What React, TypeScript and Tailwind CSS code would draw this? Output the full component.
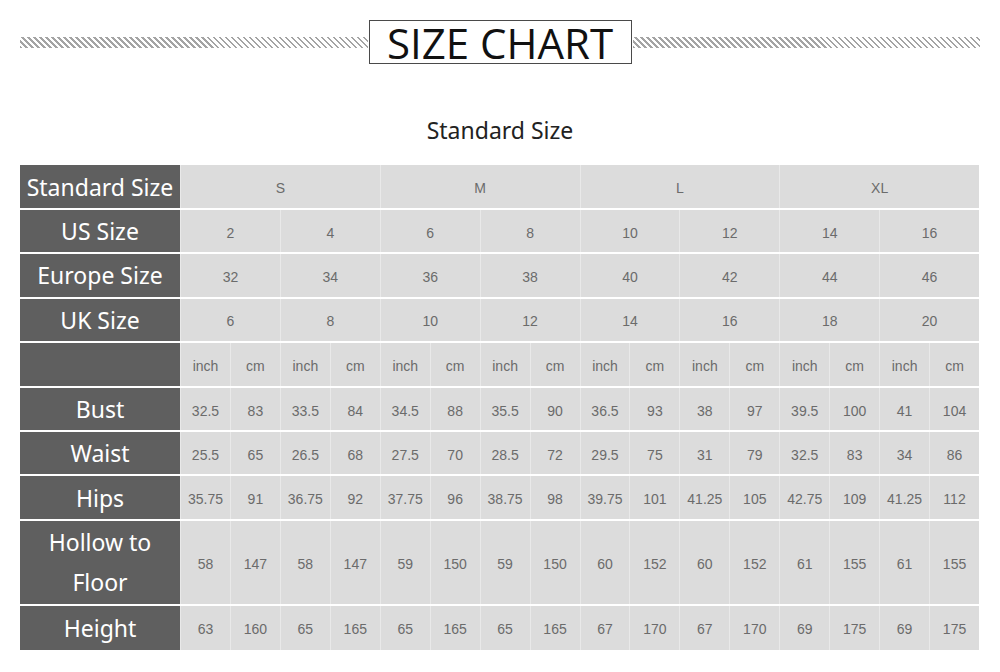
import React from "react";

const sizes = ["S", "M", "L", "XL"];
const us = ["2", "4", "6", "8", "10", "12", "14", "16"];
const eu = ["32", "34", "36", "38", "40", "42", "44", "46"];
const uk = ["6", "8", "10", "12", "14", "16", "18", "20"];
const units = Array.from({ length: 16 }, (_, i) => (i % 2 === 0 ? "inch" : "cm"));
const bust = ["32.5", "83", "33.5", "84", "34.5", "88", "35.5", "90", "36.5", "93", "38", "97", "39.5", "100", "41", "104"];
const waist = ["25.5", "65", "26.5", "68", "27.5", "70", "28.5", "72", "29.5", "75", "31", "79", "32.5", "83", "34", "86"];
const hips = ["35.75", "91", "36.75", "92", "37.75", "96", "38.75", "98", "39.75", "101", "41.25", "105", "42.75", "109", "41.25", "112"];
const hollow = ["58", "147", "58", "147", "59", "150", "59", "150", "60", "152", "60", "152", "61", "155", "61", "155"];
const height = ["63", "160", "65", "165", "65", "165", "65", "165", "67", "170", "67", "170", "69", "175", "69", "175"];

const headFont = { fontFamily: '"Noto Sans", "DejaVu Sans", sans-serif' };
const dataFont = { fontFamily: '"Liberation Sans", Arial, sans-serif' };

type Span = "col-span-4" | "col-span-2" | "col-span-1";

function Head({ children }: { children: React.ReactNode }) {
  return (
    <div
      className="w-[160px] shrink-0 bg-[#5f5f5f] text-white text-[23px] leading-[40px] flex items-center justify-center text-center"
      style={headFont}
    >
      {children}
    </div>
  );
}

function Cells({ values, span }: { values: string[]; span: Span }) {
  return (
    <div className="flex-1 grid grid-cols-16" style={dataFont}>
      {values.map((v, i) => (
        <div
          key={i}
          className={`${span} bg-[#dcdcdc] border-l border-[#e9e9e9] flex items-center justify-center pt-[4px] text-[14px] text-[#6b6b6b]`}
        >
          {v}
        </div>
      ))}
    </div>
  );
}

function Row({ label, values, span, h }: { label: React.ReactNode; values: string[]; span: Span; h: string }) {
  return (
    <div className={`flex ${h}`}>
      <Head>{label}</Head>
      <Cells values={values} span={span} />
    </div>
  );
}

export default function App() {
  return (
    <div className="w-[1000px] h-[672px] bg-white overflow-hidden">
      <div className="flex items-center px-[20px] pt-[20px]">
        <div className="flex-1 h-[11px] bg-[repeating-linear-gradient(45deg,#a4a4a4_0_1.5px,transparent_1.5px_4.24px)]" />
        <div
          className="w-[263px] h-[44px] mx-[1px] border border-[#4a4a4a] flex items-center justify-center text-[42px] leading-none text-[#111] pt-[1px]"
          style={{ fontFamily: '"Open Sans", "Noto Sans", sans-serif' }}
        >
          SIZE CHART
        </div>
        <div className="flex-1 h-[11px] bg-[repeating-linear-gradient(45deg,#a4a4a4_0_1.5px,transparent_1.5px_4.24px)]" />
      </div>

      <div className="mt-[51px] text-center text-[23px] leading-[30px] text-[#222]" style={headFont}>
        Standard Size
      </div>

      <div className="mt-[20px] mx-[20px] w-[959px] flex flex-col gap-y-[2px]">
        <Row label="Standard Size" values={sizes} span="col-span-4" h="h-[43px]" />
        <Row label="US Size" values={us} span="col-span-2" h="h-[42.3px]" />
        <Row label="Europe Size" values={eu} span="col-span-2" h="h-[42.3px]" />
        <Row label="UK Size" values={uk} span="col-span-2" h="h-[42.3px]" />
        <Row label="" values={units} span="col-span-1" h="h-[43px]" />
        <Row label="Bust" values={bust} span="col-span-1" h="h-[42.3px]" />
        <Row label="Waist" values={waist} span="col-span-1" h="h-[42.3px]" />
        <Row label="Hips" values={hips} span="col-span-1" h="h-[42.3px]" />
        <Row
          label={
            <span>
              Hollow to
              <br />
              Floor
            </span>
          }
          values={hollow}
          span="col-span-1"
          h="h-[83.3px]"
        />
        <Row label="Height" values={height} span="col-span-1" h="h-[43.5px]" />
      </div>
    </div>
  );
}
